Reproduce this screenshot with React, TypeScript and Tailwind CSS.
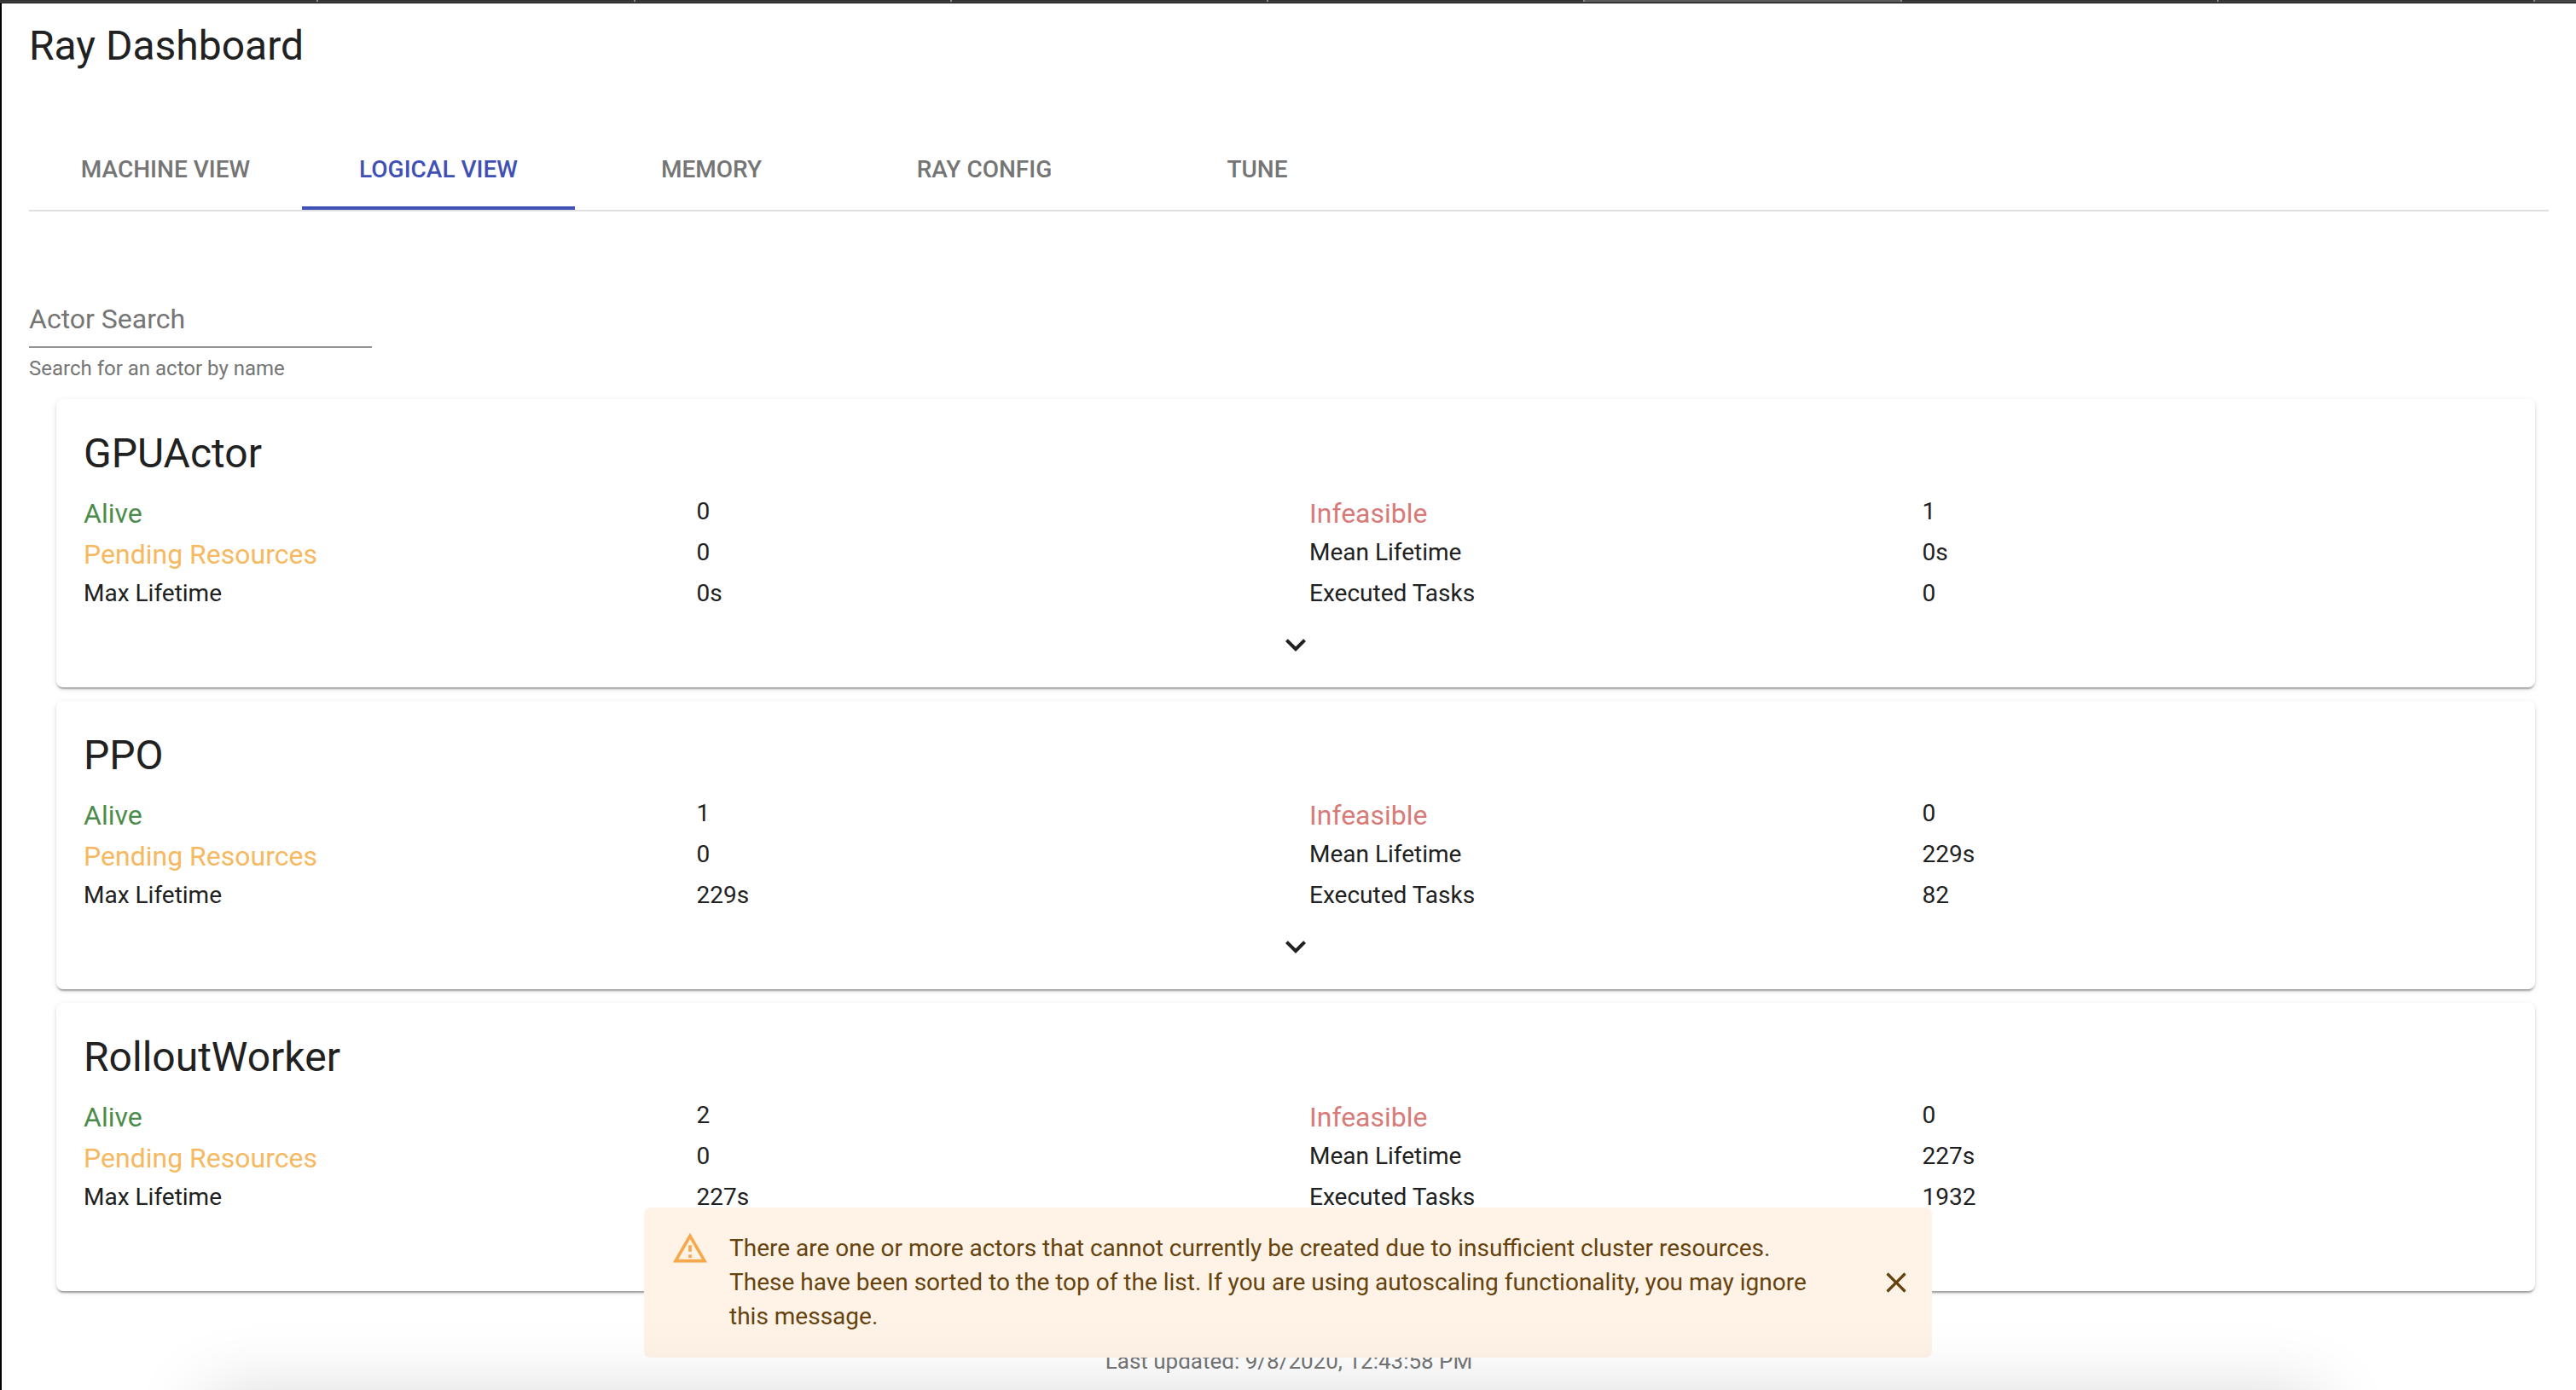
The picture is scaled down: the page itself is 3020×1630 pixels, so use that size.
import { useState } from "react";

type Actor = {
  name: string;
  alive: string;
  infeasible: string;
  pending: string;
  mean: string;
  max: string;
  executed: string;
};

const actors: Actor[] = [
  { name: "GPUActor", alive: "0", infeasible: "1", pending: "0", mean: "0s", max: "0s", executed: "0" },
  { name: "PPO", alive: "1", infeasible: "0", pending: "0", mean: "229s", max: "229s", executed: "82" },
  { name: "RolloutWorker", alive: "2", infeasible: "0", pending: "0", mean: "227s", max: "227s", executed: "1932" },
];

const tabs = ["MACHINE VIEW", "LOGICAL VIEW", "MEMORY", "RAY CONFIG", "TUNE"];

const browserTabs = ["a", "b", "c", "d", "e", "active", "g", "h"];

function BrowserEdge() {
  return (
    <div>
      <div className="flex h-0.5 bg-[#333333] pl-0.5">
        {browserTabs.map((id) => (
          <div
            key={id}
            className={
              id === "active"
                ? "flex-1 border-r-2 border-[#8a8a8a] bg-[#5a5a5a]"
                : "flex-1 border-r-2 border-[#8a8a8a] last:flex-none last:border-transparent"
            }
          />
        ))}
        <div className="w-12 bg-[#444444]" />
      </div>
      <div className="h-px bg-[#555555]" />
      <div className="h-px bg-black" />
    </div>
  );
}

function Stat({ label, value, tone }: { label: string; value: string; tone?: string }) {
  return (
    <>
      <dt className={tone ? `text-[32px] leading-[44px] ${tone}` : "text-[28px] leading-[40px]"}>{label}</dt>
      <dd className="text-[28px] leading-[40px]">{value}</dd>
    </>
  );
}

function ActorCard({ actor }: { actor: Actor }) {
  return (
    <section className="rounded-lg bg-white pt-8 pb-[18px] pl-8 shadow-[0_4px_2px_-2px_rgba(0,0,0,0.2),0_2px_2px_0_rgba(0,0,0,0.14),0_2px_6px_0_rgba(0,0,0,0.12)]">
      <h2 className="text-[48px] leading-[64px]">{actor.name}</h2>
      <dl className="mt-4 grid auto-rows-[48px] grid-cols-4">
        <Stat label="Alive" value={actor.alive} tone="text-[#4c8c4a]" />
        <Stat label="Infeasible" value={actor.infeasible} tone="text-[#d87a78]" />
        <Stat label="Pending Resources" value={actor.pending} tone="text-[#f6b860]" />
        <Stat label="Mean Lifetime" value={actor.mean} />
        <Stat label="Max Lifetime" value={actor.max} />
        <Stat label="Executed Tasks" value={actor.executed} />
      </dl>
      <div className="flex justify-center pr-8">
        <button type="button" aria-label={`Expand ${actor.name}`} className="p-2">
          <svg viewBox="0 0 24 24" className="size-12 fill-current" aria-hidden="true">
            <path d="M16.59 8.59L12 13.17 7.41 8.59 6 10l6 6 6-6z" />
          </svg>
        </button>
      </div>
    </section>
  );
}

function WarningAlert({ onClose }: { onClose: () => void }) {
  return (
    <div
      role="alert"
      className="fixed bottom-[38px] left-1/2 flex w-1/2 -translate-x-1/2 items-start rounded-lg bg-[#fef3e6] px-8 py-3 text-[28px] leading-[40px] text-[#66420d]"
    >
      <svg viewBox="0 0 24 24" className="mt-[14px] mr-6 size-11 shrink-0 fill-[#f6a84a]" aria-hidden="true">
        <path d="M12 5.99L19.53 19H4.47L12 5.99M12 2L1 21h22L12 2zm1 14h-2v2h2v-2zm0-6h-2v4h2v-4z" />
      </svg>
      <p className="max-w-[1300px] flex-1 py-4">
        There are one or more actors that cannot currently be created due to insufficient cluster resources. These have
        been sorted to the top of the list. If you are using autoscaling functionality, you may ignore this message.
      </p>
      <button type="button" aria-label="Close" onClick={onClose} className="-mr-4 ml-auto self-center p-1.5">
        <svg viewBox="0 0 24 24" className="size-10 fill-current" aria-hidden="true">
          <path d="M19 6.41L17.59 5 12 10.59 6.41 5 5 6.41 10.59 12 5 17.59 6.41 19 12 13.41 17.59 19 19 17.59 13.41 12z" />
        </svg>
      </button>
    </div>
  );
}

export default function App() {
  const [active, setActive] = useState("LOGICAL VIEW");
  const [alertOpen, setAlertOpen] = useState(true);
  return (
    <div className="flex min-h-screen flex-col overflow-hidden bg-white font-[Roboto,sans-serif] text-[#212121]">
      <BrowserEdge />
      <div className="flex-1 border-l-2 border-black px-8 pt-[18px]">
        <h1 className="text-[48px] leading-[64px]">Ray Dashboard</h1>
        <div role="tablist" className="mt-16 flex border-b-2 border-[#e0e0e0]">
          {tabs.map((tab) => (
            <button
              key={tab}
              type="button"
              role="tab"
              aria-selected={tab === active}
              onClick={() => setActive(tab)}
              className={
                tab === active
                  ? "h-24 w-80 border-b-4 border-[#3f51b5] pt-1.5 text-[28px] font-medium text-[#3f51b5]"
                  : "h-24 w-80 border-b-4 border-transparent pt-1.5 text-[28px] font-medium text-[#757575]"
              }
            >
              {tab}
            </button>
          ))}
        </div>
        <main>
          <div className="mt-[100px] w-[402px]">
            <input
              type="text"
              aria-label="Actor Search"
              aria-describedby="search-help"
              placeholder="Actor Search"
              className="block h-[60px] w-full border-b-2 border-[#949494] pb-1.5 text-[32px] outline-none placeholder:text-[#757575]"
            />
            <p id="search-help" className="mt-1 text-[24px] leading-[40px] text-[#757575]">
              Search for an actor by name
            </p>
          </div>
          <div className="mt-4 mr-4 ml-8 flex flex-col gap-4">
            {actors.map((actor) => (
              <ActorCard key={actor.name} actor={actor} />
            ))}
          </div>
        </main>
        <footer className="mt-[62px] text-center text-[26px] leading-[40px] text-[#757575]">
          Last updated: 9/8/2020, 12:43:58 PM
        </footer>
      </div>
      {alertOpen && <WarningAlert onClose={() => setAlertOpen(false)} />}
      <div className="pointer-events-none fixed top-full right-[10%] left-[8%] mt-2 h-96 shadow-[0_0_80px_rgba(0,0,0,0.17)]" />
    </div>
  );
}
